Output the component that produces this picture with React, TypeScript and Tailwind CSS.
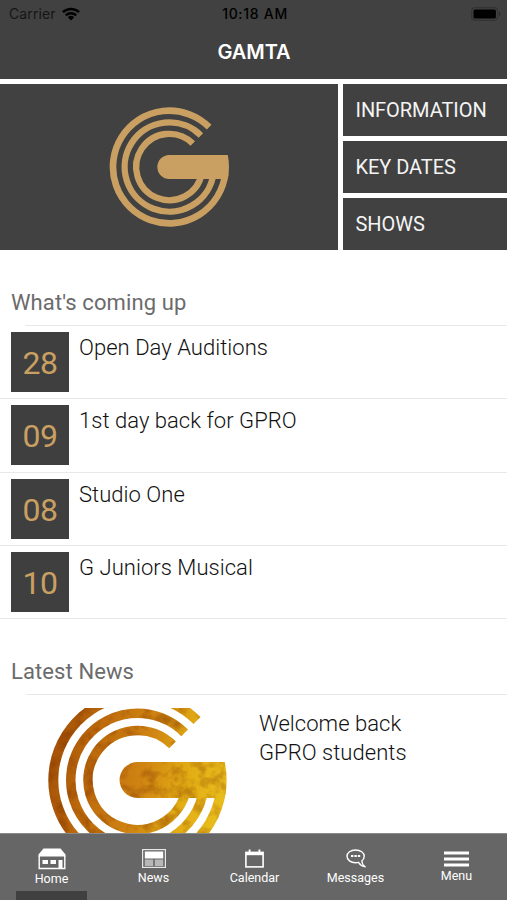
import type { ReactNode } from 'react';

const QUICK_LINKS = ['INFORMATION', 'KEY DATES', 'SHOWS'];

const EVENTS = [
  { day: '28', title: 'Open Day Auditions' },
  { day: '09', title: '1st day back for GPRO' },
  { day: '08', title: 'Studio One' },
  { day: '10', title: 'G Juniors Musical' },
];

// Three open rings joined by a rounded bar, centred on 0,0 with radius 179
function LogoShape({ color }: { color: string }) {
  return (
    <g>
      <g fill="none" stroke={color}>
        <path d="M119.500 -119.500 A169 169 0 1 0 167.800 20" strokeWidth="20" />
        <path d="M94.750 -94.750 A134 134 0 1 0 132.500 20" strokeWidth="19" />
        <path d="M70.350 -70.350 A99.500 99.500 0 1 0 97.500 20" strokeWidth="19" />
      </g>
      <path d="M0 -36 H175.300 A179 179 0 0 1 175.300 36 H0 A36 36 0 0 1 0 -36 Z" fill={color} />
    </g>
  );
}

function WifiIcon() {
  return (
    <svg className="h-[14px] w-[18px]" viewBox="0 0 18 14">
      <g fill="none" stroke="#000" strokeWidth="2.500">
        <path d="M0.900 5.200 A11.600 11.600 0 0 1 17.100 5.200" />
        <path d="M3.800 8.300 A7.600 7.600 0 0 1 14.200 8.300" />
      </g>
      <path d="M9 13.600 L5.800 10.300 A4.700 4.700 0 0 1 12.200 10.300 Z" fill="#000" />
    </svg>
  );
}

function BatteryIcon() {
  return (
    <svg className="h-[14px] w-[30px]" viewBox="0 0 30 14">
      <rect x="0.700" y="0.700" width="26" height="12.600" rx="3.500" fill="none" stroke="#333" strokeWidth="1.200" />
      <rect x="2.500" y="2.500" width="22.400" height="9" rx="1.500" fill="#000" />
      <path d="M28 4.800 A2.400 2.400 0 0 1 28 9.200 Z" fill="#2b2b2b" />
    </svg>
  );
}

function HomeIcon() {
  return (
    <svg className="h-[22px] w-[28px]" viewBox="0 0 28 22">
      <path d="M5.500 0.500 H22.500 L27.500 6.500 V8.500 H0.500 V6.500 Z" fill="#fff" />
      <path d="M1.200 8 V20.500 H26.800 V8" fill="none" stroke="#fff" strokeWidth="1.400" />
      <rect x="4.500" y="12" width="5.500" height="4" fill="#fff" />
      <rect x="12.500" y="12" width="5.500" height="4" fill="#fff" />
      <rect x="20.500" y="12" width="4" height="8.500" fill="#fff" />
    </svg>
  );
}

function NewsIcon() {
  return (
    <svg className="h-[19px] w-[24px]" viewBox="0 0 24 19">
      <rect x="0.600" y="0.600" width="22.800" height="17.800" fill="none" stroke="#e6e6e6" strokeWidth="1.200" />
      <rect x="2.800" y="2.500" width="18.400" height="7" fill="#fff" />
      <rect x="2.800" y="10.500" width="8.400" height="6.500" fill="#b8b8b8" />
      <rect x="12.800" y="10.500" width="8.400" height="6.500" fill="#b8b8b8" />
    </svg>
  );
}

function CalendarIcon() {
  return (
    <svg className="h-[19px] w-[19px]" viewBox="0 0 19 19">
      <rect x="0.900" y="3.400" width="17.200" height="14.500" fill="none" stroke="#fff" strokeWidth="1.600" />
      <rect x="1" y="3" width="17" height="3.200" fill="#fff" />
      <path d="M4.600 0.500 V4 M14.400 0.500 V4" stroke="#fff" strokeWidth="1.800" />
    </svg>
  );
}

function MessagesIcon() {
  return (
    <svg className="h-[19px] w-[20px]" viewBox="0 0 20 19">
      <path
        d="M12.500 13.300 C11.500 13.600 10.600 13.700 9.500 13.700 C4.700 13.700 1 11 1 7.300 C1 3.700 4.700 1 9.500 1 C14.500 1 18.200 3.700 18.200 7.300 C18.200 9.200 17.300 10.800 15.800 12 C16 14.200 16.700 15.900 18.600 17.500 C15.800 17 13.800 15.500 12.500 13.300 Z"
        fill="none"
        stroke="#fff"
        strokeWidth="1.400"
      />
      <g fill="#fff">
        <rect x="5" y="6" width="2.400" height="2" />
        <rect x="8.400" y="6" width="2.400" height="2" />
        <rect x="11.800" y="6" width="2.400" height="2" />
      </g>
    </svg>
  );
}

function MenuIcon() {
  return (
    <svg className="h-[16px] w-[25px]" viewBox="0 0 25 16">
      <path d="M0 2 H25 M0 8 H25 M0 14 H25" stroke="#fff" strokeWidth="3" />
    </svg>
  );
}

function SectionTitle({ children }: { children: ReactNode }) {
  return <h2 className="pl-[11px] text-[22px] leading-[30px] tracking-[0.1px] text-[#6b6b6b]">{children}</h2>;
}

function Tab({ label, icon, className }: { label: string; icon: ReactNode; className: string }) {
  return (
    <div className={`flex flex-1 flex-col items-center text-[12.500px] leading-4 text-white ${className}`}>
      {icon}
      <span>{label}</span>
    </div>
  );
}

export default function App() {
  return (
    <div className="flex h-[900px] w-[507px] flex-col overflow-hidden bg-white font-['Roboto',sans-serif]">
      <header className="h-[79px] shrink-0 bg-[#414141] font-['Inter',sans-serif]">
        <div className="grid h-[27px] grid-cols-3 items-center pr-[6px] pl-[9px] text-black">
          <div className="flex items-center gap-[6px] text-[14px] tracking-[0.1px] text-[#151515]">
            <span>Carrier</span>
            <WifiIcon />
          </div>
          <span className="text-center text-[14px] font-medium tracking-[0.7px]">10:18 AM</span>
          <div className="flex justify-end">
            <BatteryIcon />
          </div>
        </div>
        <h1 className="pt-[10px] pl-px text-center text-[20px] leading-[30px] font-semibold tracking-[-0.1px] text-white">GAMTA</h1>
      </header>

      <section className="mt-[5px] flex h-[166px] shrink-0 gap-[5px]">
        <div className="flex w-[338px] items-center justify-center bg-[#414141]">
          <svg className="h-[120px] w-[120px]" viewBox="-181 -180 360 360">
            <LogoShape color="#c9a062" />
          </svg>
        </div>
        <div className="flex flex-1 flex-col gap-[5px]">
          {QUICK_LINKS.map((link) => (
            <div key={link} className="flex flex-1 items-center bg-[#414141] pl-[12.500px] text-[20px] tracking-[-0.050px] text-[#f4f4f4]">
              {link}
            </div>
          ))}
        </div>
      </section>

      <main className="flex-1 overflow-hidden pt-[38px]">
        <SectionTitle>What's coming up</SectionTitle>
        <div className="mt-[7px] ml-[25px] h-px bg-[#e8e8e8]" />
        <ul>
          {EVENTS.map((event) => (
            <li key={event.day} className="flex h-[73.300px] gap-[10px] border-b border-[#e8e8e8] pt-[6px] pl-[11px]">
              <div className="flex h-[60px] w-[58px] items-center justify-center bg-[#3f3f3f] pt-[2px] text-[32px] tracking-[-0.5px] text-[#c9a062]">
                {event.day}
              </div>
              <p className="text-[22px] leading-[31px] font-light tracking-[0.040px] text-[#111]">{event.title}</p>
            </li>
          ))}
        </ul>

        <div className="mt-[38px]">
          <SectionTitle>Latest News</SectionTitle>
        </div>
        <div className="mt-[7px] ml-[26px] h-px bg-[#e8e8e8]" />
        <article className="flex pt-[13px]">
          <svg className="ml-[11px] h-[144px] w-[238px] shrink-0" viewBox="11 708 238 144">
            <defs>
              <linearGradient id="gold" gradientUnits="userSpaceOnUse" x1="-175" y1="-80" x2="175" y2="0">
                <stop offset="0" stopColor="#a35008" />
                <stop offset="0.250" stopColor="#bd6a0c" />
                <stop offset="0.550" stopColor="#d08512" />
                <stop offset="0.800" stopColor="#e3ae14" />
                <stop offset="1" stopColor="#e8bb1c" />
              </linearGradient>
              <filter id="foil" x="-5%" y="-5%" width="110%" height="110%" colorInterpolationFilters="sRGB">
                <feTurbulence type="fractalNoise" baseFrequency="0.070" numOctaves="4" seed="7" result="noise" />
                <feColorMatrix in="noise" type="matrix" values="0 0 0 0 0.500  0 0 0 0 0.200  0 0 0 0 0  1.200 0 0 0 -0.520" result="stain" />
                <feComposite in="stain" in2="SourceAlpha" operator="in" result="marks" />
                <feMerge>
                  <feMergeNode in="SourceGraphic" />
                  <feMergeNode in="marks" />
                </feMerge>
              </filter>
            </defs>
            <g filter="url(#foil)">
              <g transform="translate(137.500 780) scale(0.498)">
                <LogoShape color="url(#gold)" />
              </g>
            </g>
          </svg>
          <p className="ml-[10px] w-[180px] pt-px text-[22px] leading-[29px] font-light tracking-[0.040px] text-[#111]">Welcome back GPRO students</p>
        </article>
      </main>

      <nav className="relative flex h-[67px] shrink-0 border-t border-[#8a8a8a] bg-[#666]">
        <Tab label="Home" icon={<HomeIcon />} className="gap-px pt-[14px] pl-px" />
        <Tab label="News" icon={<NewsIcon />} className="gap-[2px] pt-[15px] pl-px" />
        <Tab label="Calendar" icon={<CalendarIcon />} className="gap-[2px] pt-[15px]" />
        <Tab label="Messages" icon={<MessagesIcon />} className="gap-[2px] pt-[15px]" />
        <Tab label="Menu" icon={<MenuIcon />} className="gap-px pt-[17px]" />
        <div className="absolute bottom-0 left-[16px] h-[9px] w-[71px] bg-[#404040]" />
      </nav>
    </div>
  );
}
